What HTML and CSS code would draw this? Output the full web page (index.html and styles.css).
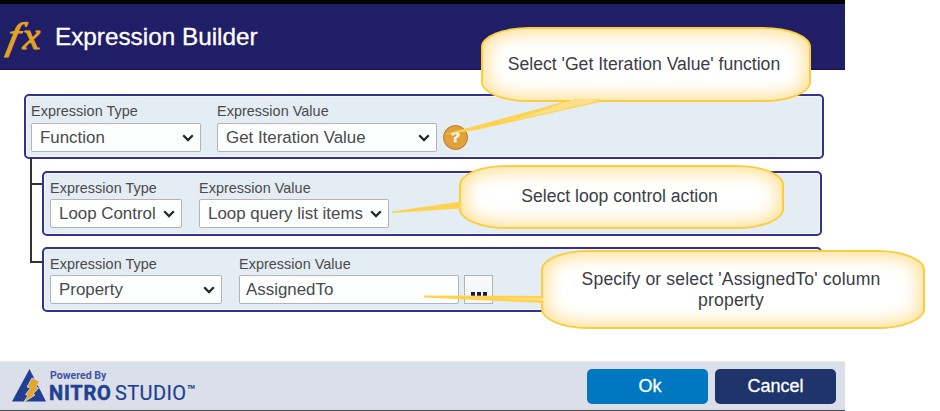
FILE: index.html
```html
<!DOCTYPE html>
<html lang="en">
<head>
<meta charset="utf-8">
<title>Expression Builder</title>
<link rel="stylesheet" href="styles.css">
</head>
<body>
<main class="dialog">
  <header class="titlebar"><span class="fx"><span class="fx-f">f</span><span class="fx-x">x</span></span><h1>Expression Builder</h1></header>
  <section class="tree">
    <div class="card root">
      <div class="field"><label>Expression Type</label><div class="control w170">Function<svg class="chev" viewBox="0 0 12 8"><path d="M1.2 1.3 6 6.1 10.8 1.3"/></svg></div></div>
      <div class="field gap16"><label>Expression Value</label><div class="control w220">Get Iteration Value<svg class="chev" viewBox="0 0 12 8"><path d="M1.2 1.3 6 6.1 10.8 1.3"/></svg></div></div>
      <span class="help">?</span>
    </div>
    <div class="children">
      <div class="card child">
        <div class="field"><label>Expression Type</label><div class="control w132">Loop Control<svg class="chev" viewBox="0 0 12 8"><path d="M1.2 1.3 6 6.1 10.8 1.3"/></svg></div></div>
        <div class="field gap17"><label>Expression Value</label><div class="control w190">Loop query list items<svg class="chev" viewBox="0 0 12 8"><path d="M1.2 1.3 6 6.1 10.8 1.3"/></svg></div></div>
      </div>
      <div class="card child">
        <div class="field"><label>Expression Type</label><div class="control w172">Property<svg class="chev" viewBox="0 0 12 8"><path d="M1.2 1.3 6 6.1 10.8 1.3"/></svg></div></div>
        <div class="field gap17"><label>Expression Value</label><div class="control text w220">AssignedTo</div></div>
        <div class="more"><i></i><i></i><i></i></div>
      </div>
    </div>
  </section>
  <footer class="footer">
    <div class="brand">
      <svg class="bolt" viewBox="0 0 34 34"><path fill="#233f91" d="M17.500 0 34 32.500H0Z"/><path fill="#e5a62e" stroke="#dce0eb" stroke-width=".8" d="M20 9 27.500 12.500 24 18 26.500 19 21 25 23 26 11.500 33.500 16 26.500 13.500 25.500 18.500 19 15 18Z"/></svg>
      <div class="brand-text"><span class="powered">Powered By</span><span class="name"><b>NITRO</b><span class="studio">STUDIO</span><span class="tm">™</span></span></div>
    </div>
    <div class="actions"><button class="ok">Ok</button><button class="cancel">Cancel</button></div>
  </footer>
</main>
<div class="callout c1">Select 'Get Iteration Value' function</div>
<div class="callout c2">Select loop control action</div>
<div class="callout c3">Specify or select 'AssignedTo' column<br>property</div>
<svg class="tails" viewBox="0 0 940 411">
  <g fill="#ffd34f">
    <path d="M443.500 134.500 565 101.500 574 99.500H600L602 101.500 476 130Z"/>
    <path fill="#ffe08a" d="M574 99.500H600L592 102.500 512 120.500Z"/>
    <path d="M392 211.500 461 201.500V208.500L392 213Z"/>
    <path d="M424 295.500 542 296V303L424 297.500Z"/>
    <path fill="#ffe690" d="M500 298.200 543 298.500V300.500Z"/>
  </g>
</svg>
</body>
</html>
```
FILE: styles.css
```css
* { box-sizing: border-box; }
body { margin: 0; width: 940px; height: 411px; overflow: hidden; background: #fff; font-family: "Liberation Sans", Arial, sans-serif; color: #4a4a4a; position: relative; }
.dialog { width: 845px; height: 411px; display: flex; flex-direction: column; border-top: 4px solid #030304; border-bottom: 1px solid #484a50; }
.titlebar { height: 66px; flex: none; background: #1f1e67; display: flex; align-items: center; padding-left: 7px; border-bottom: 1px solid #17155c; }
.fx { width: 48px; display: flex; font: italic 38px/50px "Liberation Serif", serif; color: #e2a224; -webkit-text-stroke: 1px #e2a224; padding: 0 0 2px 2px; }
.fx-f { width: 14px; transform: skewX(-11deg) scaleX(1.15); }
.fx-x { transform: scaleX(1.05); }
h1 { margin: 0; font-size: 24.300px; font-weight: 400; line-height: 28px; color: #fff; -webkit-text-stroke: .3px #fff; }
.tree { flex: 1; padding: 24px 21px 0 24px; }
.card { display: flex; height: 65px; background: #e4edf3; border: 2px solid #35318e; border-radius: 5px; padding: 8px 5px 0; box-shadow: inset 0 0 0 1px #f3f8fb; }
.root { width: 800px; }
.children { position: relative; padding: 12px 0 0 18px; display: grid; gap: 11px; }
.children::before { content: ""; position: absolute; left: 6px; top: 0; width: 12px; height: 102px; border: solid #333; border-width: 0 0 2px 2px; }
.children::after { content: ""; position: absolute; left: 8px; top: 24px; width: 10px; height: 2px; background: #333; }
.child { width: 780px; padding: 7px 6px 0; }
.child label { margin-top: 1px; margin-bottom: -1px; letter-spacing: .05px; }
.field { display: flex; flex-direction: column; gap: 4px; }
label { font-size: 14.400px; line-height: 15px; height: 15px; white-space: nowrap; }
.root label { letter-spacing: .05px; }
.control { height: 29px; background: #fdfefe; border: 1px solid #b4b4b4; border-radius: 2px; padding: 0 6px 0 8px; font-size: 16.900px; line-height: 26px; display: flex; justify-content: space-between; align-items: center; white-space: nowrap; }
.text { padding-left: 6px; }
.chev { width: 12px; height: 8px; fill: none; stroke: #282828; stroke-width: 2.300; }
.w170 { width: 170px; }
.w132 { width: 132px; }
.w190 { width: 190px; }
.w172 { width: 172px; }
.w220 { width: 220px; }
.gap16 { margin-left: 16px; }
.gap17 { margin-left: 17px; }
.help { width: 25px; height: 25px; margin: 21px 0 0 6px; border-radius: 50%; border: 1.500px solid #b57b22; background: #e1a03a; color: #fff; font-weight: 700; font-size: 15px; line-height: 22px; text-align: center; -webkit-text-stroke: .5px #fff; }
.more { width: 29px; height: 29px; margin: 19px 0 0 5px; background: #f7f8fa; border: 1px solid #b4b4b4; display: flex; justify-content: center; gap: 2px; padding-top: 16px; }
.more i { width: 4px; height: 4px; background: #17174a; }
.footer { height: 49px; flex: none; background: #dadfea; display: flex; justify-content: space-between; padding: 7px 9px 0 12px; border-top: 1px solid #e8ebf2; }
.brand { display: flex; gap: 3px; color: #233f91; }
.bolt { width: 34px; height: 34px; }
.brand-text { display: flex; flex-direction: column; }
.powered { font: 700 10.600px/14px Roboto, sans-serif; color: #3f55a0; margin-left: 1px; }
.name { font: 20px/20px Roboto, sans-serif; display: flex; }
.name b { width: 62px; font-weight: 700; letter-spacing: .8px; -webkit-text-stroke: .5px #233f91; }
.studio { margin-left: 4px; letter-spacing: .4px; -webkit-text-stroke: .2px #233f91; }
.tm { font-size: 14px; font-weight: 700; line-height: 14px; }
.actions { display: flex; gap: 7px; }
button { border: 0; border-radius: 5px; width: 121px; height: 35px; padding: 0; color: #fff; font: 18px/33px "Liberation Sans", sans-serif; -webkit-text-stroke: .3px #fff; }
.ok { background: #0078c1; padding-left: 5px; }
.cancel { background: #1f346b; }
.callout { position: absolute; display: flex; align-items: center; justify-content: center; text-align: center; font-size: 17.600px; line-height: 21px; color: #3d3d43; background: #fff; border: 2px solid #fdcc3e; border-radius: 48px / 20px; box-shadow: inset 0 0 18px 4px #ffdf91; white-space: nowrap; }
.c1 { left: 481px; top: 27px; width: 330px; height: 75px; padding: 0 4px 1px 0; }
.c2 { left: 459px; top: 165px; width: 325px; height: 64px; padding: 0 4px 2px 0; }
.c3 { left: 541px; top: 250px; width: 384px; height: 79px; padding: 0 4px 0 0; letter-spacing: .15px; }
.tails { position: absolute; left: 0; top: 0; width: 940px; height: 411px; pointer-events: none; }
```
